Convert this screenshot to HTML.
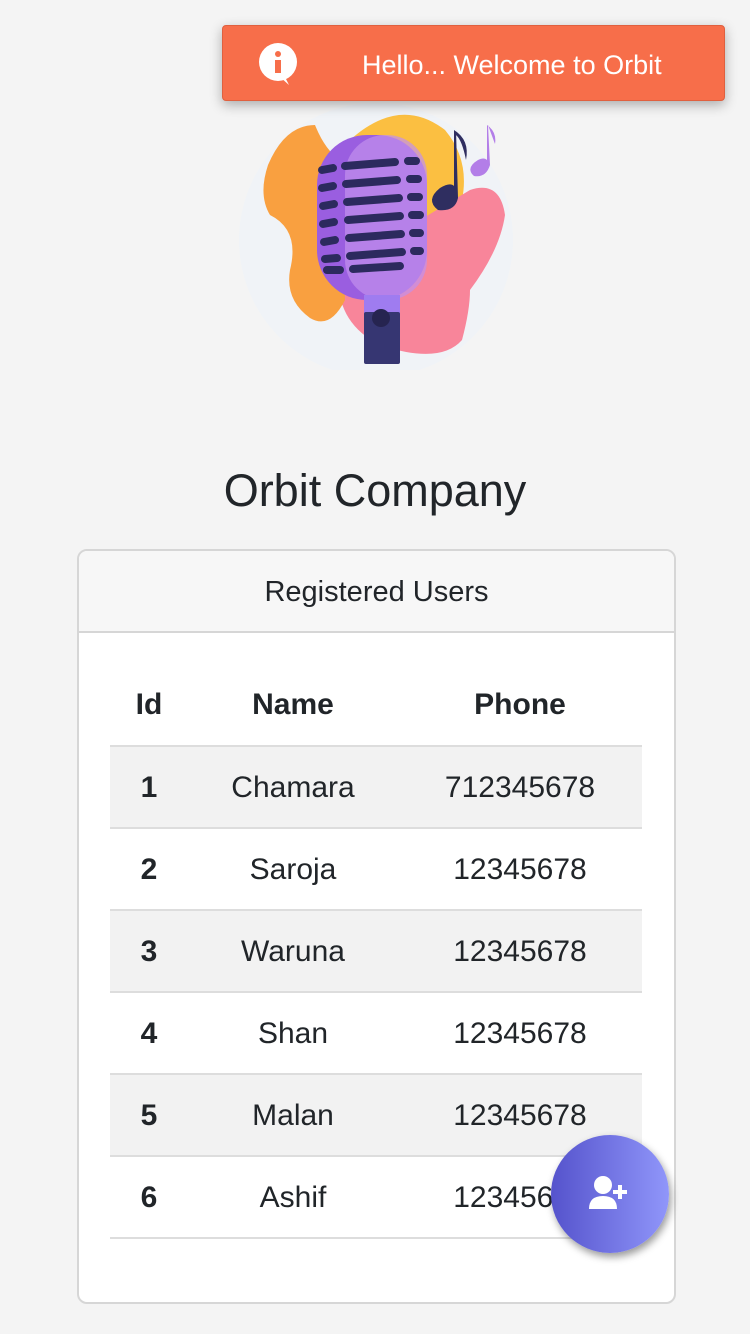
<!DOCTYPE html>
<html><head><meta charset="utf-8"><style>
*{margin:0;padding:0;box-sizing:border-box}
body{width:750px;height:1334px;background:#f4f4f4;font-family:"Liberation Sans",sans-serif;color:#212529;position:relative;overflow:hidden}
.toast{position:absolute;left:222px;top:25px;width:503px;height:76px;background:#f76e4a;border:1px solid #e0603f;border-radius:4px;box-shadow:0 4px 12px rgba(0,0,0,.3);color:#fff;font-size:27px}
.toast span{position:absolute;left:139px;top:24px}
.title{position:absolute;top:465px;width:750px;text-align:center;font-size:45px}
.card{position:absolute;left:77px;top:549px;width:599px;height:755px;background:#fff;border:2px solid #d6d6d6;border-radius:10px;overflow:hidden}
.card .hd{height:82px;background:#f7f7f7;border-bottom:2px solid #d6d6d6;text-align:center;font-size:29px;line-height:82px}
table{position:absolute;left:31px;top:113px;width:532px;border-collapse:collapse;font-size:30px}
th{height:82px;font-weight:bold;text-align:center;border-bottom:2px solid #ddd}
td{height:82px;text-align:center;border-bottom:2px solid #ddd;padding-top:2px}
tr.s td{background:#f2f2f2}
td:first-child{font-weight:bold}
.fab{position:absolute;left:551px;top:1135px;width:118px;height:118px;border-radius:50%;background:linear-gradient(90deg,#5553cc,#9096fa);box-shadow:2px 4px 8px rgba(0,0,0,.4)}
</style></head><body>
<svg style="position:absolute;left:237px;top:100px" width="280" height="270" viewBox="237 100 280 270">
<circle cx="376" cy="240" r="137" fill="#f0f3f7"/>
<path d="M350 140 Q400 95 445 130 Q470 160 462 200 Q470 230 430 250 L360 240 Z" fill="#fbbf41"/>
<path d="M340 260 Q330 320 380 345 Q440 365 462 340 Q470 310 470 290 Q500 250 505 215 Q500 180 470 190 L420 220 Z" fill="#f8859a"/>
<path d="M268 165 Q285 125 315 125 Q325 150 340 160 L345 300 Q330 330 310 318 Q285 300 290 270 Q300 230 270 215 Q258 195 268 165Z" fill="#f9a040"/>
<rect x="317" y="135" width="110" height="165" rx="50" fill="#9a5ee0"/>
<rect x="345" y="135" width="82" height="165" rx="40" fill="#c290ec" opacity=".7"/>
<g stroke="#2c2a5e" stroke-width="8" stroke-linecap="round">
<line x1="322" y1="170" x2="333" y2="168"/><line x1="345" y1="166" x2="395" y2="162"/><line x1="408" y1="161" x2="416" y2="161"/>
<line x1="322" y1="188" x2="333" y2="186"/><line x1="346" y1="184" x2="397" y2="180"/><line x1="410" y1="179" x2="418" y2="179"/>
<line x1="323" y1="206" x2="334" y2="204"/><line x1="347" y1="202" x2="399" y2="198"/><line x1="411" y1="197" x2="419" y2="197"/>
<line x1="323" y1="224" x2="334" y2="222"/><line x1="348" y1="220" x2="400" y2="216"/><line x1="412" y1="215" x2="420" y2="215"/>
<line x1="324" y1="242" x2="335" y2="240"/><line x1="349" y1="238" x2="401" y2="234"/><line x1="413" y1="233" x2="420" y2="233"/>
<line x1="325" y1="259" x2="337" y2="258"/><line x1="350" y1="256" x2="402" y2="252"/><line x1="414" y1="251" x2="420" y2="251"/>
<line x1="327" y1="270" x2="340" y2="270"/><line x1="353" y1="269" x2="400" y2="266"/>
</g>
<rect x="364" y="295" width="36" height="40" fill="#9f7cf0"/>
<rect x="364" y="312" width="36" height="52" rx="2" fill="#363672"/>
<circle cx="381" cy="318" r="9" fill="#262450"/>
<path d="M456 130 L458 198 Q455 212 438 210 Q425 200 440 188 Q450 182 454 186 L454 130 Q470 140 466 160 Q462 140 456 135Z" fill="#2f2e60"/>
<path d="M488 125 L490 165 Q486 178 474 176 Q465 168 478 160 Q484 157 487 160 L487 125 Q497 132 495 144Z" fill="#b37ee8"/>
</svg>
<div class="toast"><svg style="position:absolute;left:35px;top:17px" width="42" height="44" viewBox="0 0 42 44"><circle cx="20" cy="19" r="19" fill="#fff"/><path d="M22 34 L31 42 L26 32Z" fill="#fff"/><circle cx="20" cy="11" r="3" fill="#f76e4a"/><rect x="17" y="17" width="6" height="13" fill="#f76e4a"/></svg><span>Hello... Welcome to Orbit</span></div>
<div class="title">Orbit Company</div>
<div class="card"><div class="hd">Registered Users</div>
<table>
<tr><th style="width:78px">Id</th><th style="width:210px">Name</th><th>Phone</th></tr>
<tr class="s"><td>1</td><td>Chamara</td><td>712345678</td></tr>
<tr><td>2</td><td>Saroja</td><td>12345678</td></tr>
<tr class="s"><td>3</td><td>Waruna</td><td>12345678</td></tr>
<tr><td>4</td><td>Shan</td><td>12345678</td></tr>
<tr class="s"><td>5</td><td>Malan</td><td>12345678</td></tr>
<tr><td>6</td><td>Ashif</td><td>12345678</td></tr>
</table></div>
<div class="fab"><svg style="position:absolute;left:38px;top:40px" width="44" height="38" viewBox="0 0 44 38"><circle cx="14" cy="10" r="9" fill="#fff"/><path d="M0 34 Q0 21 14 21 Q28 21 28 34 Z" fill="#fff"/><rect x="29" y="10" width="4" height="14" fill="#fff"/><rect x="24" y="15" width="14" height="4" fill="#fff"/></svg></div>
</body></html>
